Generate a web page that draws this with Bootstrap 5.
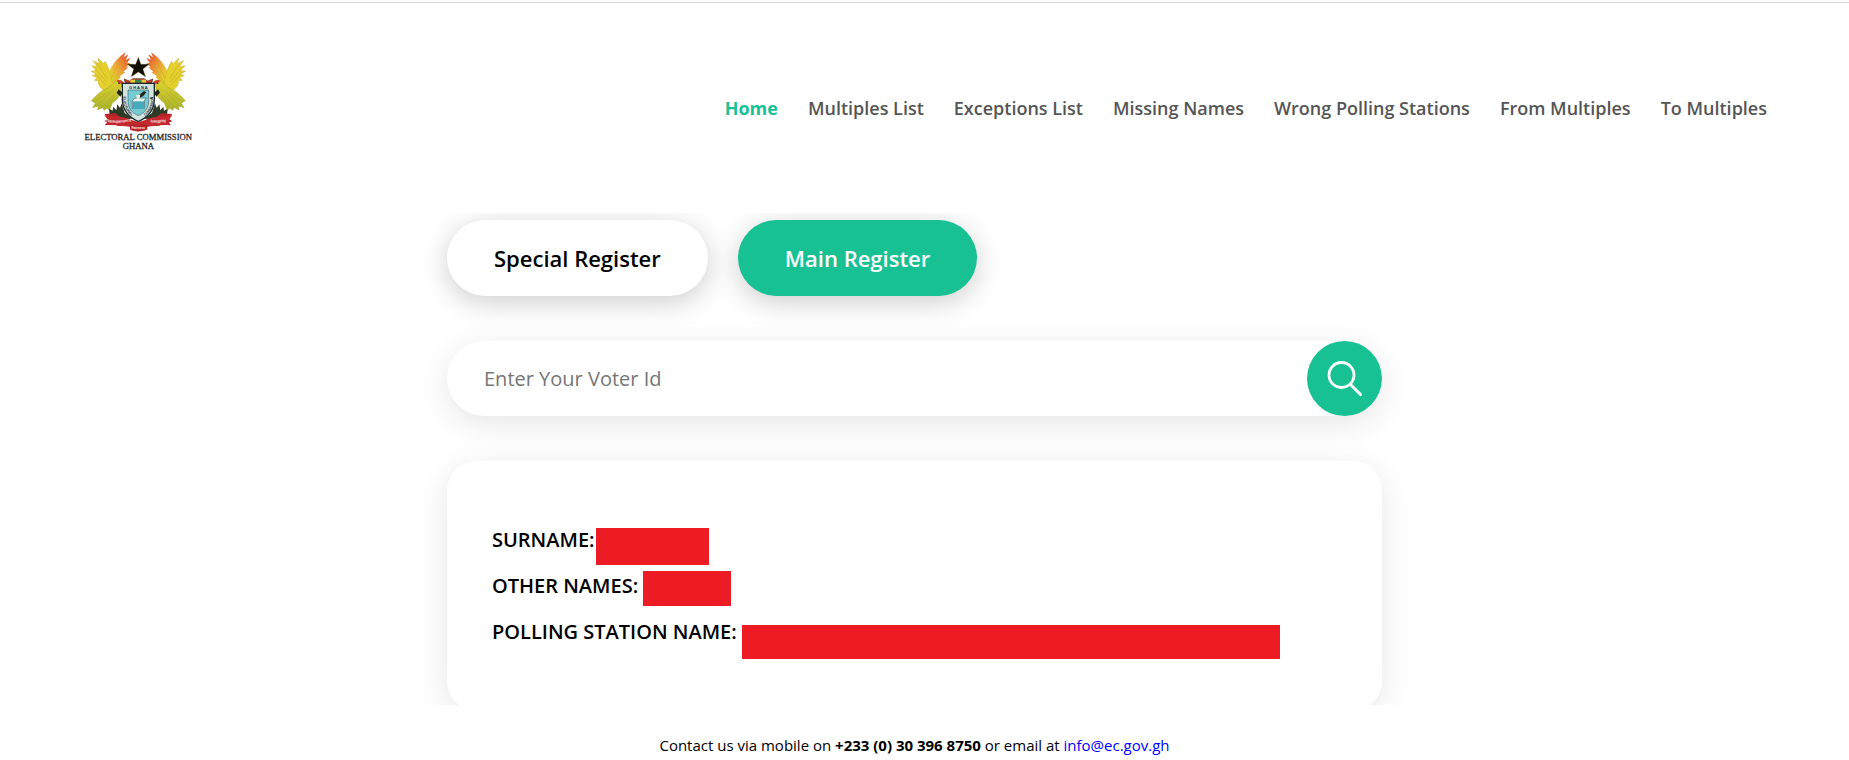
<!DOCTYPE html>
<html lang="en">
<head>
<meta charset="utf-8">
<meta name="viewport" content="width=device-width, initial-scale=1">
<title>Electoral Commission Ghana</title>
<link href="https://cdn.jsdelivr.net/npm/bootstrap@5.3.0/dist/css/bootstrap.min.css" rel="stylesheet">
<style>
  :root { --ec-green: #18c194; }
  body { font-family: "Open Sans", sans-serif; color: #000; background: #fff; padding-right: 20px; }
  .top-line { height: 3px; border-bottom: 1px solid #d9d9d9; margin-right: -20px; }
  .site-header { height: 210px; padding: 0 62px 0 70px; background: #fff; z-index: 2; }
  .crest { width: 140px; height: 120px; margin-top: 37px; font-family: "Liberation Serif", serif; }
  .menu { gap: 30px; margin-top: 92px; }
  .menu .nav-link { padding: 0; font-size: 18px; line-height: 27px; font-weight: 600; color: #555; }
  .menu .nav-link.active { color: var(--ec-green); font-weight: 700; }
  .lookup { padding-top: 7px; height: 492px; overflow: hidden; }
  .lookup-inner { width: 935px; max-width: 100%; }
  .pill { height: 76px; padding: 0 47px; border-radius: 38px; font-size: 22px; font-weight: 600; color: #000; background: #fff; border: 0; box-shadow: 0 6px 28px rgba(0,0,0,.2); }
  .pill.current { background: var(--ec-green); color: #fff; }
  .pills { gap: 30px; margin-bottom: 45px; }
  .finder { height: 75px; border-radius: 38px; background: #fff; box-shadow: 0 8px 32px rgba(0,0,0,.1); margin-bottom: 45px; }
  .finder input { border: 0; background: none; outline: 0; padding: 0 37px; font-size: 20px; }
  .finder input::placeholder { color: #757575; }
  .finder button { width: 75px; height: 75px; border: 0; background: var(--ec-green); }
  .result { border-radius: 30px; min-height: 250px; padding: 56px 45px; background: #fff; box-shadow: 0 8px 32px rgba(0,0,0,.1); }
  .result dl > div { height: 46px; gap: 5px; }
  .result dl > div:first-child { gap: 1px; }
  .result dt { font-size: 20px; line-height: 46px; font-weight: 600; }
  .hidden-value { background: #ed1c24; height: 35px; margin: 8px 0 0; }
  .hidden-value.is-surname { width: 113px; height: 37px; margin-top: 11px; }
  .hidden-value.is-other { width: 88px; }
  .hidden-value.is-station { width: 538px; height: 34px; margin-top: 16px; }
  .site-footer { font-size: 15px; line-height: 24px; padding-top: 28px; }
  .site-footer a { color: #00f; }
</style>
</head>
<body>
<div class="top-line"></div>
<header class="site-header position-relative d-flex justify-content-between align-items-start">
  <a href="#" class="d-block" aria-label="Electoral Commission Ghana">
    <svg class="crest d-block" viewBox="0 0 420 360">
      <defs>
        <linearGradient id="wing" x1="0" y1="1" x2="1" y2="0">
          <stop offset=".3" stop-color="#e3cf2c"/><stop offset=".55" stop-color="#eda33a"/><stop offset=".9" stop-color="#e2542c"/>
        </linearGradient>
        <linearGradient id="tail" x1="0" y1="0" x2="0" y2="1">
          <stop offset="0" stop-color="#ddd02f"/><stop offset="1" stop-color="#a9b32c"/>
        </linearGradient>
        <g id="eagle">
          <path fill="url(#wing)" d="M118 152C106 132 110 108 120 90C128 74 140 54 167 37L161 52L175 43L167 60L181 53L171 70L181 68L168 82L175 82L160 95L166 97L150 108L152 113L138 124L134 148Z"/>
          <path fill="#e5cf2d" stroke="#c7b02a" stroke-width="1.500" d="M104 152C90 144 83 132 85 122L73 121L82 113L67 107L79 103L63 93L79 92L65 77L82 80L69 62L88 71L84 54L101 71L105 64C117 84 125 105 127 132L144 136L150 152L132 156Z"/>
          <path fill="none" stroke="#c5a028" stroke-width="1.500" d="M80 68 111 116M76 86 109 126M78 103 108 136M150 62 124 116M163 72 128 124M156 92 130 130"/>
          <path fill="url(#tail)" stroke="#a4a62c" stroke-width="1.500" d="M132 127C146 114 162 120 162 137L152 141C154 168 140 180 127 189L119 210L110 205L103 211L97 203L83 210L85 198L68 203L76 190L64 182C80 164 96 150 113 144Z"/>
          <path fill="none" stroke="#aca62a" stroke-width="1.500" d="M80 200 121 157M97 203 131 164M112 201 138 164M72 186 112 157"/>
          <path fill="#d13d2c" d="M139 122C148 117 157 121 162 130L157 133L145 128Z"/>
          <circle cx="147" cy="130" r="2.500" fill="#222"/>
          <path fill="#242416" d="M146 148 158 158 151 170 140 158Z"/>
        </g>
        <g id="flank">
          <path fill="#2d3b25" d="M119 226 117 206 128 212 130 200 139 211 142 193 150 204 155 190 164 219 190 236 154 238Z"/>
          <path fill="#b52329" d="M103 222 137 220 151 232 180 237 183 254 145 257 103 244 117 234Z"/>
          <path fill="#81171c" d="M121 244 155 244 166 257 141 256 132 250Z"/>
        </g>
      </defs>
      <use href="#eagle"/>
      <use href="#eagle" transform="matrix(-1 0 0 1 410 0)"/>
      <use href="#flank"/>
      <use href="#flank" transform="matrix(-1 0 0 1 410 0)"/>
      <path fill="#131008" stroke="#b49a34" stroke-width="1" d="M205 51 213 73 239 72 219 87 227 111 205 96 183 111 191 87 171 72 197 73Z"/>
      <path fill="#c93a2d" stroke="#5b3324" stroke-width="2" d="M162 117 178 123 188 116 222 116 233 123 249 117 245 129H166Z"/>
      <path fill="#e5ca32" d="M181 119h14v9h-14zM214 119h14v9h-14z"/>
      <path fill="#36854a" d="M195 119h19v9h-19z"/>
      <path fill="#d4e3e0" stroke="#1b2929" stroke-width="4" d="M157 130H253V178C253 212 231 233 205 245C179 233 157 212 157 178Z"/>
      <path fill="#75cbd1" stroke="#3b6870" stroke-width="2" d="M174 150H236V184C236 207 221 220 205 227C189 220 174 207 174 184Z"/>
      <path fill="#e6f2ed" stroke="#335f67" stroke-width="2" d="M187 181 195 174H229L223 182V205H187Z"/>
      <path fill="#49a9bd" d="M189 184H222V207H189Z"/>
      <path fill="#2a2118" d="M207 165 222 153 229 157 219 169 207 173Z"/>
      <path fill="#efede0" d="M199 165 211 164 208 178 200 175Z"/>
      <g font-family="Liberation Sans, sans-serif" font-weight="700" fill="#17272c" text-anchor="middle">
        <text x="205" y="147" font-size="12">G H A N A</text>
        <path id="leftRim" fill="none" d="M160 151V180C160 207 179 227 202 238"/>
        <path id="rightRim" fill="none" d="M208 238C232 227 250 207 250 180V151"/>
        <text font-size="11"><textPath href="#leftRim" startOffset="50%">ELECTORAL</textPath></text>
        <text font-size="10"><textPath href="#rightRim" startOffset="50%">COMMISSION</textPath></text>
      </g>
      <path fill="#c3282e" d="M103 225C139 232 153 226 181 239L205 246 229 239C257 226 271 232 307 225L295 242 302 256C270 253 255 258 232 260V269L205 272 180 269V260C154 258 137 253 104 256L115 242Z"/>
      <path fill="#c3282e" stroke="#7c171d" stroke-width="1.500" d="M181 255 205 260 230 255 226 270 205 274 184 270Z"/>
      <g font-family="Liberation Sans, sans-serif" font-size="12" font-weight="700" fill="#fff0ed" text-anchor="middle">
        <path id="leftBand" fill="none" d="M107 244Q138 254 184 242"/>
        <path id="rightBand" fill="none" d="M227 244Q263 253 303 241"/>
        <text><textPath href="#leftBand" startOffset="50%">Transparency</textPath></text>
        <text><textPath href="#rightBand" startOffset="50%">Integrity</textPath></text>
        <text x="205" y="268" font-size="10">Fairness</text>
      </g>
      <g font-size="26" fill="#222" stroke="#222" stroke-width=".8" text-anchor="middle">
        <text x="205" y="299">ELECTORAL COMMISSION</text>
        <text x="205" y="328">GHANA</text>
      </g>
    </svg>
  </a>
  <nav class="nav menu">
    <a class="nav-link active" href="#">Home</a>
    <a class="nav-link" href="#">Multiples List</a>
    <a class="nav-link" href="#">Exceptions List</a>
    <a class="nav-link" href="#">Missing Names</a>
    <a class="nav-link" href="#">Wrong Polling Stations</a>
    <a class="nav-link" href="#">From Multiples</a>
    <a class="nav-link" href="#">To Multiples</a>
  </nav>
</header>
<main class="lookup">
  <div class="lookup-inner mx-auto">
    <div class="pills d-flex">
      <button type="button" class="pill">Special Register</button>
      <button type="button" class="pill current">Main Register</button>
    </div>
    <form class="finder d-flex" role="search">
      <input type="text" class="flex-grow-1" placeholder="Enter Your Voter Id" aria-label="Enter Your Voter Id">
      <button type="button" class="rounded-circle p-0" aria-label="Search"><svg class="d-block" width="75" height="75" viewBox="0 0 75 75" fill="none" stroke="#fff"><circle cx="34.500" cy="34" r="12.500" stroke-width="2.800"/><path d="M43.500 43.500 53.500 53.500" stroke-width="3" stroke-linecap="round"/></svg></button>
    </form>
    <section class="result">
      <dl class="m-0">
        <div class="d-flex align-items-start"><dt>SURNAME:</dt><dd class="hidden-value is-surname"></dd></div>
        <div class="d-flex align-items-start"><dt>OTHER NAMES:</dt><dd class="hidden-value is-other"></dd></div>
        <div class="d-flex align-items-start"><dt>POLLING STATION NAME:</dt><dd class="hidden-value is-station"></dd></div>
      </dl>
    </section>
  </div>
</main>
<footer class="site-footer text-center">Contact us via mobile on <strong>+233 (0) 30 396 8750</strong> or email at <a class="text-decoration-none" href="mailto:info@ec.gov.gh">info@ec.gov.gh</a></footer>
<script src="https://cdn.jsdelivr.net/npm/bootstrap@5.3.0/dist/js/bootstrap.bundle.min.js"></script>
</body>
</html>
